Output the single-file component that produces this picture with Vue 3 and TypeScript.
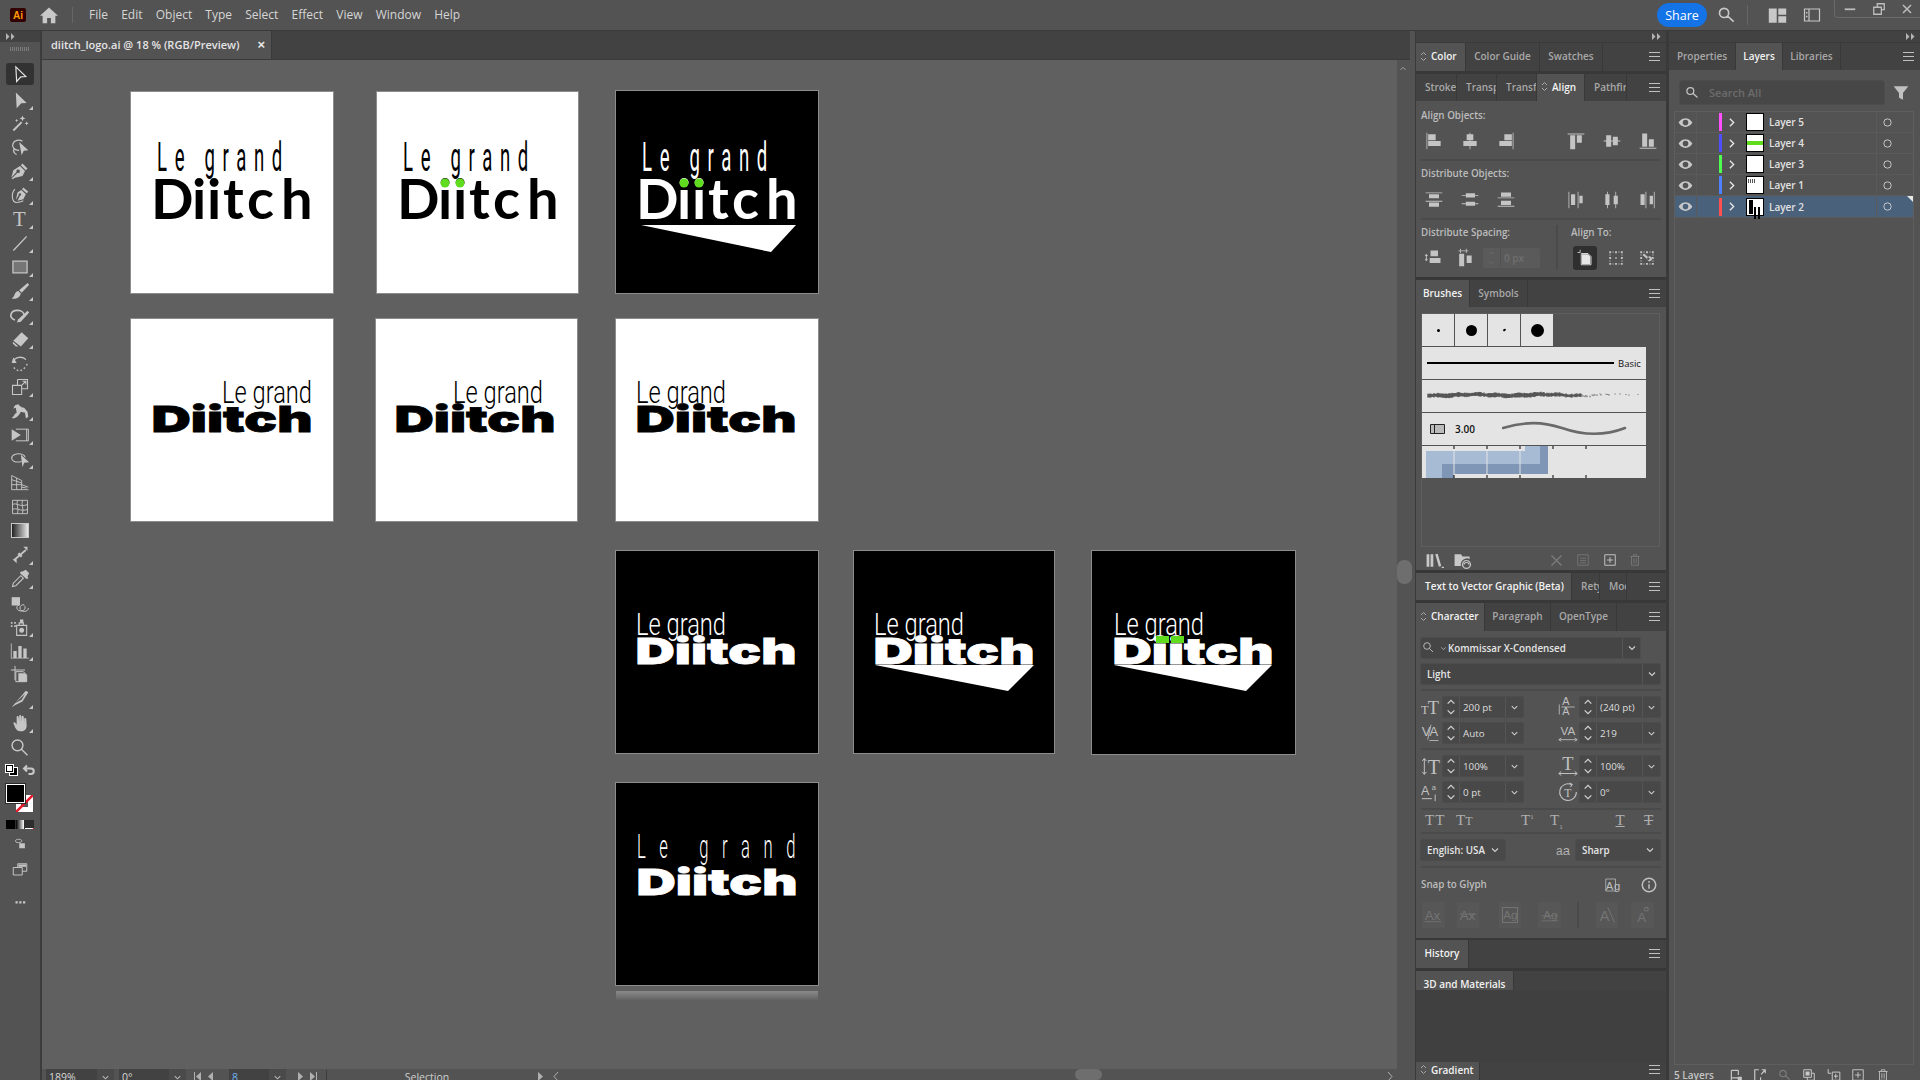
<script setup lang="ts">
import { h } from 'vue'

const r = (x: number, y: number, w: number, hh: number) => `M${x} ${y}h${w}v${hh}h${-w}z`

type Icon = { f?: string; s?: string; sw?: number; t?: [number, number, number, string][]; fa?: string; fo?: number }

const handles = r(3, 3, 2.5, 2.5) + r(18.5, 3, 2.5, 2.5) + r(3, 18.5, 2.5, 2.5) + r(18.5, 18.5, 2.5, 2.5) + r(10.75, 3, 2.5, 2.5) + r(10.75, 18.5, 2.5, 2.5) + r(3, 10.75, 2.5, 2.5) + r(18.5, 10.75, 2.5, 2.5)
const dashBox = 'M7 4h2M15 4h2M7 20h2M15 20h2M4 7v2M4 15v2M20 7v2M20 15v2'

const ICONS: Record<string, Icon> = {
  sel: { s: 'M7 3.5L19 15L13 15.5L8 21Z', sw: 1.4 },
  dsel: { f: 'M7 3L20 15.5L13.5 16L8 22Z' },
  wand: { s: 'M4 21L14 11', sw: 2.4, f: 'M15 3l1 2.500 2.500 1-2.500 1-1 2.500-1-2.500-2.500-1 2.500-1zM20 10l.7 1.800 1.800.7-1.800.7-.7 1.800-.7-1.800-1.800-.7 1.800-.7zM8 7l.6 1.400 1.400.6-1.400.6-.6 1.400-.6-1.400-1.400-.6 1.400-.6z' },
  lasso: { s: 'M11 16C5 16 2 12 3.500 8C5 4 11 2.500 15 5M5 14C3.500 17 5 20 8 21', sw: 1.5, f: 'M11 6L22 16L16.500 16.500L14 22Z' },
  pen: { f: 'M15 3L21 9L19 11L13 5ZM12 6L18 12L15 18L6 20L3 22L2 21L9 14A2 2 0 1 0 8 13L1.500 20L4 11Z' },
  cpen: { f: 'M16 3L22 8L20 10L14.500 5ZM13.500 6L19 11L16 17L9 19L12 13A1.500 1.500 0 1 0 10.500 12L7 18L9 9Z', s: 'M6 5C1 10 2 21 8 21C11 21 14 20 16 19', sw: 1.3 },
  type: { t: [[3.500, 20, 25, 'T']], fa: 'Liberation Serif' },
  line: { s: 'M4 21L20 4', sw: 1.6 },
  rect: { s: 'M3.500 5h17v14h-17z', sw: 1.5, f: 'M3.500 5h17v14h-17z', fo: 0.3 },
  brush: { f: 'M21 2.500L23 4.500L14 14L11 11ZM10 12L13 15C12 20 7 22 2 21C5 19 5 17 6 15C7 13 9 12 10 12Z' },
  shaper: { s: 'M17 12A8 6 0 1 0 6 18', sw: 2, f: 'M21 7L23 9L13 20L8 21L10 17Z' },
  eraser: { f: 'M14 4L22 11L13 21L4 14ZM4 15.500L10 21H7L3 17Z' },
  rotate: { s: 'M4 10C6 5 15 3 19 8M20.500 13l-.5 2M18 17.500l-1.500 1.500M14.500 20.500l-2 .5M10 21l-2-.5M6 19l-1.500-1.500', sw: 1.6, f: 'M4 5L8 12L2 12Z' },
  scale: { s: 'M3 10h11v11h-11zM9 3h12v11h-7M9 10V3M13 11L19 5M15 5h4v4', sw: 1.3 },
  warp: { f: 'M2 20C5 19 5 15 8 14L7 8L4 9L6 5L10 4C12 7 14 8 17 8L21 13L22 19L19 21L18 14L13 13C11 17 9 20 4 21Z' },
  free: { f: 'M2 5L13 12L2 19Z', s: 'M7 5h15v14h-15M20 5v14', sw: 1.2 },
  shape: { s: 'M14 15C6 17 2 14 2 11C2 7 8 5 13 6C17 7 18 9 18 10', sw: 1.3, f: 'M13 7L23 16L17 16.500L15 22Z' },
  persp: { s: 'M2 3V20H22M2 3L14 9V20M2 8L14 12M2 14H14M8 6V20M14 14L22 17M14 17L20 18', sw: 1.1 },
  mesh: { s: 'M3 4h18v16h-18zM3 9C8 6 12 13 21 9M3 15C8 12 12 18 21 15M9 4C7 9 11 14 9 20M15 4C13 9 17 14 15 20', sw: 1.1 },
  width: { s: 'M5 18L19 6', sw: 2, f: 'M16 2h5v5zM3 17h5v5zM11 9l4 4-2 2-4-4zM7 5l5 5M17 19l-5-5' },
  drop: { s: 'M3 21L4 17L13 8L16 11L7 20Z', sw: 1.3, f: 'M15 3L19 1L23 5L21 9L22 11L20 12L12 5L13 3Z' },
  blend: { f: 'M2 5h10v10h-10z', s: 'M17 15a5 4 0 1 1-6-1M22 18a5 4 0 1 1-5-4', sw: 1.2 },
  spray: { s: 'M8 10h12v12h-12zM11 10V7h5v3', sw: 1.3, f: 'M12 3h4v4h-4zM1 6h2v2h-2zM5 6h2v2h-2zM1 10h2v2h-2zM5 10h2v2h-2zM14 13a3 3 0 1 0 .01 0z' },
  graph: { f: r(1, 3, 1, 18) + r(1, 20, 22, 1) + r(4, 12, 4, 8) + r(10, 6, 4, 14) + r(16, 9, 4, 11) },
  board: { s: 'M1 6h17M6 1v17M7 8h9l4 4v8h-13z', sw: 1.2, f: 'M10 10h8l2 3v7h-10z' },
  slice: { f: 'M19 2L22 4L15 15L7 19L2 22ZM18 6L6 17L14 13Z' },
  hand: { f: 'M4 12C5 10 7 12 8 14V5C8 3 10 3 10.500 5L11 11V3.500C11 2 13 2 13.500 3.500L14 11V4.500C14 3 16 3 16.500 4.500L17 12V7C17 5.500 19 5.500 19.500 7L20 15C20 19 18 22 13 22C9 22 8 20 6 17Z' },
  zoom: { s: 'M15.500 10a6.500 6.500 0 1 1-13 0a6.500 6.500 0 1 1 13 0M14 15L21 22', sw: 1.7 },
  draw: { s: 'M4 6C4 3 14 3 14 6C14 8 12 9 9 9C5 9 4 8 4 6Z', sw: 1.4, f: 'M10 10h9v8h-9z' },
  screen: { s: 'M3 10h12v10h-12zM9 10V5h12v10h-6', sw: 1.3, f: 'M10 6h10v3h-10z' },
  more: { f: 'M6 11h3v3h-3zM11 11h3v3h-3zM16 11h3v3h-3z' },
  alignL: { f: r(3, 2, 1, 20) + r(5, 4, 9, 7) + r(5, 12, 15, 6) },
  alignHC: { f: r(11.5, 2, 1, 20) + r(8, 4, 8, 7) + r(4, 12, 16, 6) },
  alignR: { f: r(20, 2, 1, 20) + r(10, 4, 9, 7) + r(4, 12, 15, 6) },
  alignT: { f: r(2, 3, 20, 1.2) + r(5, 5, 6, 17) + r(13, 5, 6, 9) },
  alignVC: { f: r(2, 11.5, 20, 1) + r(5, 5, 6, 14) + r(13, 7, 6, 10) },
  alignB: { f: r(2, 20, 20, 1.2) + r(5, 3, 6, 16) + r(13, 10, 6, 9) },
  distT: { f: r(2, 3, 20, 1) + r(6, 5, 12, 5) + r(2, 13, 20, 1) + r(6, 15, 12, 5) },
  distVC: { f: r(2, 6, 20, 1) + r(7, 4, 11, 5) + r(2, 16, 20, 1) + r(7, 14, 11, 5) },
  distB: { f: r(6, 3, 12, 5) + r(2, 9, 20, 1) + r(6, 13, 12, 5) + r(2, 19, 20, 1) },
  distL: { f: r(3, 2, 1, 20) + r(6, 5, 5, 13) + r(14, 2, 1, 20) + r(16, 7, 4, 9) },
  distHC: { f: r(6, 2, 1, 20) + r(4, 5, 5, 13) + r(16, 2, 1, 20) + r(14, 7, 5, 10) },
  distR: { f: r(3, 5, 5, 13) + r(9, 2, 1, 20) + r(14, 7, 4, 10) + r(19, 2, 1, 20) },
  spV: { f: r(9, 3, 9, 7) + r(8, 12, 13, 6) + 'M4 7l2 2.500h-1.400v4H6l-2 2.500-2-2.500h1.400v-4H2z' },
  spH: { f: r(5, 7, 6, 15) + r(14, 9, 6, 9) + r(4, 3, 12, 1) + r(6, 1, 1, 5) + r(13, 1, 1, 5) },
  artb: { s: 'M7 6h9l4 4v11H7z', sw: 1.2, f: 'M8 7h8l3 3v10H8zM2 4h4v1H2zM5 1h1v3H5z' },
  selb: { s: dashBox, sw: 1, f: handles + r(11, 11, 2, 2) },
  keyb: { s: dashBox, sw: 1, f: handles + 'M8 6l8 7-2 2-8-7zM13 11a3 3 0 1 0 5 4a3 3 0 1 0-5-4z' },
  library: { f: r(2, 4, 3.5, 16) + r(7, 4, 3.5, 16) + 'M13 4L16 3.500L20.500 19L17.500 20ZM21 20h3v1.500h-3z' },
  folder: { s: 'M17 12a5 5 0 1 0 .01 0M14 17a3 2.500 0 0 1 6 0', sw: 1.5, f: 'M2 4h8l2 3h9v3a8 8 0 0 0-11 9H2z' },
  nobrush: { s: 'M4 4L20 20M20 4L4 20', sw: 2 },
  list: { s: 'M3 3h18v18H3zM7 9h10M7 13h10M7 17h10', sw: 1.3 },
  plus: { s: 'M3 3h18v18H3zM12 7v10M7 12h10', sw: 1.6 },
  trash: { s: 'M4 6h16M9 6V3h6v3M6 6v15h12V6M10 9v9M14 9v9', sw: 1.4 },
  search: { s: 'M14 9.500a5.500 5.500 0 1 1-11 0a5.500 5.500 0 1 1 11 0M13 13.500L20 20', sw: 2 },
  filter: { f: 'M1 2h22L15 12v10l-6-3v-7z' },
  info: { s: 'M21 12a9 9 0 1 1-18 0a9 9 0 1 1 18 0M12 11v6', sw: 2, f: 'M11 6.500h2v2.500h-2z' },
  eye: { f: 'M12 5C6 5 2 10 1 12C2 14 6 19 12 19C18 19 22 14 23 12C22 10 18 5 12 5ZM12 7.500a4.500 4.500 0 1 1 0 9a4.500 4.500 0 1 1 0-9z' },
  chev: { s: 'M9 5L16 12L9 19', sw: 2.4 },
  circle: { s: 'M20 12a8 8 0 1 1-16 0a8 8 0 1 1 16 0', sw: 2 },
  caret: { s: 'M6 9L12 15L18 9', sw: 2.2 },
  up: { s: 'M6 14L12 8L18 14', sw: 2.2 },
  caretb: { s: 'M4 8L12 16L20 8', sw: 3 },
  upb: { s: 'M4 16L12 8L20 16', sw: 3 },
  home: { f: 'M12 2L24 13H20.500V23H14.500V16H9.500V23H3.500V13H0Z' },
  layouts: { f: r(1, 3, 10, 18) + r(13, 3, 10, 8) + r(13, 13, 10, 8) },
  panel: { s: 'M2 4h20v16H2zM8 4v16', sw: 1.6, f: r(4, 8, 2, 2) + r(4, 13, 2, 2) },
  min: { f: r(3, 11, 18, 3) },
  restore: { s: 'M9 8V3h12v10h-5M3 9h13v12H3z', sw: 2.2 },
  close: { s: 'M4 4L20 20M20 4L4 20', sw: 3 },
  artboardL: { s: 'M4 4h12M4 4v17M4 17h12M16 4v8', sw: 2, f: r(15, 15, 7, 7) },
  outL: { s: 'M10 3H3v18M14 11L21 3M15 3h6v6M13 21v-5', sw: 2 },
  locate: { s: 'M14 9.500a5.500 5.500 0 1 1-11 0a5.500 5.500 0 1 1 11 0M13 13.500L20 20', sw: 2 },
  mask: { s: 'M3 3h13v13H3zM9 16v5h12V9h-5', sw: 1.7, f: r(6, 6, 7, 7) },
  sublayer: { s: 'M9 7h13v14H9zM15 10v8M12 14h7M2 2v7h5', sw: 1.7 },
  tt1: { t: [[0, 20, 15, 'T'], [8, 20, 22, 'T']], fa: 'Liberation Serif' },
  lead: { t: [[5, 10, 13, 'A'], [5, 22, 13, 'A']], fa: 'Liberation Sans', s: 'M4 12h16M1.500 9v12', sw: 1 },
  kern: { t: [[1, 16, 16, 'V'], [10, 16, 16, 'A']], fa: 'Liberation Sans', s: 'M12 2L8 20M10 21h11', sw: 1 },
  track: { t: [[3, 14, 14, 'VA']], fa: 'Liberation Sans', s: 'M1 20h22M1 20l3-2M1 20l3 2M23 20l-3-2M23 20l-3 2', sw: 1 },
  vs: { t: [[8, 21, 24, 'T']], fa: 'Liberation Serif', s: 'M4 3v19M4 3L1.500 6M4 3L6.500 6M4 22L1.500 19M4 22L6.500 19', sw: 1.2 },
  hs: { t: [[5, 17, 22, 'T']], fa: 'Liberation Serif', s: 'M1 21h22M1 21l3-2.500M1 21l3 2.500M23 21l-3-2.500M23 21l-3 2.500', sw: 1.2 },
  base: { t: [[0, 15, 15, 'A'], [13, 9, 9, 'a']], fa: 'Liberation Sans', s: 'M1 20h12M17 23v-8', sw: 1.2 },
  rot: { t: [[7.500, 18, 14, 'T']], fa: 'Liberation Serif', s: 'M22 12a10 10 0 1 1-6-9M14 1l3 2-2 3', sw: 1.3 },
  font: { s: 'M11 9a5 5 0 1 1-10 0a5 5 0 1 1 10 0M10 13L15 18', sw: 1.4 },
  aag: { t: [[1, 18, 15, 'A'], [12, 18, 15, 'g']], fa: 'Liberation Sans', s: 'M1 4h13v16H1z', sw: 1 },
  ax1: { t: [[2, 18, 16, 'Ax']], fa: 'Liberation Sans', s: 'M2 20h20', sw: 1 },
  ax2: { t: [[2, 18, 16, 'Ax']], fa: 'Liberation Sans', s: 'M2 11h20', sw: 1 },
  ag3: { t: [[4, 17, 14, 'Ag']], fa: 'Liberation Sans', s: 'M3 3h18v18H3z', sw: 1.3 },
  ag4: { t: [[4, 17, 14, 'Ag']], fa: 'Liberation Sans', s: 'M2 13h20M2 19h20', sw: 1 },
  a5: { t: [[3, 19, 18, 'A']], fa: 'Liberation Sans', s: 'M13 3L21 21', sw: 1.2 },
  a6: { t: [[5, 20, 16, 'A']], fa: 'Liberation Sans', s: 'M14 3h4v4h-4z', sw: 1.2 },
}

const Ico = (p: { n: string; w?: number }) => {
  const ic = ICONS[p.n]
  const w = p.w ?? 20
  const kids: ReturnType<typeof h>[] = []
  if (ic.f) kids.push(h('path', { d: ic.f, fill: 'currentColor', 'fill-opacity': ic.fo ?? 1 }))
  if (ic.s) kids.push(h('path', { d: ic.s, fill: 'none', stroke: 'currentColor', 'stroke-width': ic.sw ?? 1.5 }))
  if (ic.t) for (const [x, y, size, str] of ic.t) kids.push(h('text', { x, y, 'font-size': size, 'font-family': ic.fa, fill: 'currentColor' }, str))
  return h('svg', { width: w, height: w, viewBox: '0 0 24 24', style: 'display:block;flex:none' }, kids)
}
Ico.props = ['n', 'w']

const Tick = () => h('svg', { width: 7, height: 11, viewBox: '0 0 7 11', style: 'flex:none;display:block' }, [h('path', { d: 'M1 4L3.500 1.500L6 4M1 7L3.500 9.500L6 7', fill: 'none', stroke: '#a8a8a8', 'stroke-width': 1 })])

const menu = ['File', 'Edit', 'Object', 'Type', 'Select', 'Effect', 'View', 'Window', 'Help']
const tools = ['sel', 'dsel', 'wand', 'lasso', 'pen', 'cpen', 'type', 'line', 'rect', 'brush', 'shaper', 'eraser', 'rotate', 'scale', 'warp', 'free', 'shape', 'persp', 'mesh', 'grad', 'width', 'drop', 'blend', 'spray', 'graph', 'board', 'slice', 'hand', 'zoom']
const noTri = new Set(['sel', 'wand', 'lasso', 'rotate', 'persp', 'mesh', 'grad', 'zoom', 'board', 'blend'])

type Tab = { l: string; w: number; on?: boolean; tick?: boolean }
const t1: Tab[] = [{ l: 'Color', w: 50, on: true, tick: true }, { l: 'Color Guide', w: 74 }, { l: 'Swatches', w: 63 }]
const t2: Tab[] = [{ l: 'Stroke', w: 41 }, { l: 'Transp', w: 40 }, { l: 'Transf', w: 40 }, { l: 'Align', w: 48, on: true, tick: true }, { l: 'Pathfir', w: 42 }]
const t3: Tab[] = [{ l: 'Brushes', w: 54, on: true }, { l: 'Symbols', w: 58 }]
const t4: Tab[] = [{ l: 'Text to Vector Graphic (Beta)', w: 156, on: true }, { l: 'Rety', w: 28 }, { l: 'Moc', w: 27 }]
const t5: Tab[] = [{ l: 'Character', w: 69, on: true, tick: true }, { l: 'Paragraph', w: 66 }, { l: 'OpenType', w: 66 }]
const t6: Tab[] = [{ l: 'History', w: 53, on: true }]
const t7: Tab[] = [{ l: '3D and Materials', w: 98, on: true }]
const t8: Tab[] = [{ l: 'Gradient', w: 64, on: true, tick: true }]
const t9: Tab[] = [{ l: 'Properties', w: 67 }, { l: 'Layers', w: 47, on: true }, { l: 'Libraries', w: 58 }]

const alignRow = ['alignL', 'alignHC', 'alignR', 'alignT', 'alignVC', 'alignB']
const distRow = ['distT', 'distVC', 'distB', 'distL', 'distHC', 'distR']

const charRows = [
  ['tt1', '200 pt', 'lead', '(240 pt)'],
  ['kern', 'Auto', 'track', '219'],
  ['vs', '100%', 'hs', '100%'],
  ['base', '0 pt', 'rot', '0°'],
]

const layers = [
  { n: 'Layer 5', c: '#ff4fff', th: 'plain' },
  { n: 'Layer 4', c: '#4f4fff', th: 'green' },
  { n: 'Layer 3', c: '#4fff4f', th: 'plain' },
  { n: 'Layer 1', c: '#4f80ff', th: 'tiny' },
  { n: 'Layer 2', c: '#ff4f4f', th: 'black', on: true },
]

const footIcons = ['artboardL', 'outL', 'locate', 'mask', 'sublayer', 'plus', 'trash']

// rough charcoal brush stroke, built from short deterministic ticks
const rough = (() => {
  let dk = ''
  let lt = ''
  for (let x = 6; x < 218; x += 1) {
    const c = 15 + Math.sin(x * 0.09) * 0.6 + Math.sin(x * 0.31) * 0.4
    const n = Math.abs(Math.sin(x * 12.9898) * 43758.5453) % 1
    if (x < 160) {
      const hh = 2.6 + n * 2.4 - Math.max(0, x - 110) * 0.018
      dk += `M${x} ${(c - hh / 2).toFixed(1)}v${hh.toFixed(1)}`
    } else if (n < 0.62 - (x - 160) * 0.009) {
      const hh = 0.8 + n * 1.6
      lt += `M${x} ${(c - 1 + n * 2).toFixed(1)}v${hh.toFixed(1)}`
    }
  }
  return { dk, lt }
})()

type Le = { x: number; y: number; len: number; size: number; ls: number; wt: number }
type Di = { x: number | string; y: number; len?: number; size: number; fam: string; wt: number; st?: number }
type Board = { x: number; y: number; w: number; h: number; dark?: boolean; le: Le; di: Di; swoosh?: string; dots?: boolean; bars?: boolean }

const spaced: Le = { x: 26, y: 79, len: 133, size: 41, ls: 17, wt: 400 }
const round: Di = { x: '20 61 76 92 116 150', y: 127, size: 56, fam: 'Lato', wt: 700 }
const wide = (x: number, y = 113): Di => ({ x: x - 1.5, y, len: 161, size: 36, fam: 'Inter', wt: 900, st: 0.8 })
const tight = (x: number): Le => ({ x, y: 84, len: 90, size: 32, ls: 0, wt: 300 })

const boards: Board[] = [
  { x: 131, y: 92, w: 202, h: 201, le: spaced, di: round },
  { x: 377, y: 92, w: 201, h: 201, le: spaced, di: round, dots: true },
  { x: 616, y: 91, w: 202, h: 202, dark: true, le: { ...spaced, y: 80 }, di: { ...round, y: 128 }, dots: true, swoosh: '25,134 180,134 155,161' },
  { x: 131, y: 319, w: 202, h: 202, le: tight(91), di: wide(22) },
  { x: 376, y: 319, w: 201, h: 202, le: tight(77), di: wide(20) },
  { x: 616, y: 319, w: 202, h: 202, le: tight(20), di: wide(21) },
  { x: 616, y: 551, w: 202, h: 202, dark: true, le: tight(20), di: wide(21) },
  { x: 854, y: 551, w: 200, h: 202, dark: true, le: tight(20), di: wide(21), swoosh: '21,114 180,114 154,140' },
  { x: 1092, y: 551, w: 203, h: 203, dark: true, le: tight(22), di: wide(22), swoosh: '22,114 180,114 154,140', bars: true },
  { x: 616, y: 783, w: 202, h: 202, dark: true, le: { x: 21, y: 75, len: 172, size: 33, ls: 27, wt: 300 }, di: wide(22, 112) },
]
</script>

<template>
  <div class="app">
    <header class="top">
      <div class="ai"><span>Ai</span></div>
      <div class="home"><Ico n="home" :w="18" /></div>
      <i class="vsep"></i>
      <nav class="menu"><span v-for="m in menu" :key="m">{{ m }}</span></nav>
      <div class="top-right">
        <button class="share">Share</button>
        <div class="topi s1"><Ico n="search" :w="20" /></div>
        <i class="vsep v2"></i>
        <div class="topi s2"><Ico n="layouts" :w="19" /></div>
        <div class="topi s3"><Ico n="panel" :w="18" /></div>
        <div class="win">
          <Ico n="min" :w="14" />
          <Ico n="restore" :w="14" />
          <Ico n="close" :w="12" />
        </div>
      </div>
    </header>

    <div class="main">
      <aside class="toolbar">
        <div class="tb-head"><svg width="9" height="7" viewBox="0 0 9 7"><path d="M0 0l3.500 3.500L0 7zM5 0l3.500 3.500L5 7z" fill="#b4b4b4" /></svg></div>
        <div class="grip"></div>
        <div v-for="(t, i) in tools" :key="t" class="tool" :class="{ act: i === 0 }">
          <div v-if="t === 'grad'" class="gradtool"></div>
          <Ico v-else :n="t" :w="20" />
          <i v-if="!noTri.has(t)" class="tri"></i>
        </div>
        <div class="defaults">
          <div class="mini"><i class="m1"></i><i class="m2"></i></div>
          <svg width="13" height="12" viewBox="0 0 24 24"><path d="M5 9h12a5 5 0 0 1 0 11h-5M9 3L3 9l6 6" fill="none" stroke="#c8c8c8" stroke-width="4" /></svg>
        </div>
        <div class="fillstroke">
          <div class="strokebox"><svg width="17" height="17" viewBox="0 0 17 17"><rect width="17" height="17" fill="#fff" /><rect x="5" y="5" width="7" height="7" fill="#535353" /><path d="M0 17L17 0" stroke="#e8172c" stroke-width="2.500" /></svg></div>
          <div class="fillbox"></div>
        </div>
        <div class="modes"><i class="bk"></i><i class="gr"></i><i class="no"><svg width="10" height="9" viewBox="0 0 10 9"><rect width="10" height="9" fill="#fff" /><path d="M0 9L10 0" stroke="#e8172c" stroke-width="2" /></svg></i></div>
        <div class="tool t2"><Ico n="draw" :w="15" /></div>
        <div class="tool t3"><Ico n="screen" :w="18" /></div>
        <div class="tool t4"><Ico n="more" :w="18" /></div>
      </aside>

      <section class="center">
        <div class="doctabs">
          <div class="doctab"><span>diitch_logo.ai @ 18 % (RGB/Preview)</span><b>×</b></div>
        </div>
        <div class="canvaswrap">
          <div class="canvas">
            <div
              v-for="(b, i) in boards"
              :key="i"
              class="board"
              :class="{ dark: b.dark }"
              :style="{ left: b.x - 42 + 'px', top: b.y - 60 + 'px', width: b.w + 'px', height: b.h + 'px' }"
            >
              <svg :width="b.w" :height="b.h" :viewBox="`0 0 ${b.w} ${b.h}`" :fill="b.dark ? '#fff' : '#000'" class="logo">
                <text
                  :x="b.le.x" :y="b.le.y" :font-size="b.le.size" :font-weight="b.le.wt" font-family="Roboto"
                  :letter-spacing="b.le.ls" :textLength="b.le.len" lengthAdjust="spacingAndGlyphs"
                >Le grand</text>
                <text
                  :x="b.di.x" :y="b.di.y" :font-size="b.di.size" :font-weight="b.di.wt" :font-family="b.di.fam"
                  :textLength="b.di.len" :lengthAdjust="b.di.len ? 'spacingAndGlyphs' : undefined"
                  :stroke="b.di.st ? (b.dark ? '#fff' : '#000') : undefined" :stroke-width="b.di.st"
                >Diitch</text>
                <polygon v-if="b.swoosh" :points="b.swoosh" />
                <template v-if="b.dots">
                  <circle cx="68" :cy="b.di.y - 36" r="4.500" fill="#5fdc1e" />
                  <circle cx="83" :cy="b.di.y - 36" r="4.500" fill="#5fdc1e" />
                </template>
                <template v-if="b.bars">
                  <rect x="64" y="85" width="13" height="7" fill="#5fdc1e" />
                  <rect x="79" y="85" width="13" height="7" fill="#5fdc1e" />
                </template>
              </svg>
            </div>
            <div class="ghost"></div>
          </div>
          <div class="vscroll">
            <Ico n="up" :w="10" class="vup" />
            <i class="vthumb"></i>
          </div>
        </div>
        <div class="status">
          <span class="sf f1">189%</span><span class="sc"><Ico n="caret" :w="11" /></span>
          <span class="sf f2">0°</span><span class="sc"><Ico n="caret" :w="11" /></span>
          <span class="nav"><svg width="26" height="11" viewBox="0 0 26 11"><path d="M1 2h1v9H1zM8 2v9L3 6.500zM20 2v9L15 6.500z" fill="#b0b0b0" /></svg></span>
          <span class="sf f3">8</span><span class="sc"><Ico n="caret" :w="11" /></span>
          <span class="nav n2"><svg width="26" height="11" viewBox="0 0 26 11"><path d="M6 2v9l5-4.500zM18 2v9l5-4.500zM24 2h1v9h-1z" fill="#b0b0b0" /></svg></span>
          <span class="sel-txt">Selection</span>
          <span class="nav n3"><svg width="26" height="11" viewBox="0 0 26 11"><path d="M1 2v9l5-4.500z" fill="#b0b0b0" /><path d="M21 2L17 6.500L21 11" fill="none" stroke="#b0b0b0" /></svg></span>
          <i class="hthumb"></i>
          <span class="nav n4"><svg width="8" height="11" viewBox="0 0 8 11"><path d="M2 2L6 6.500L2 11" fill="none" stroke="#b0b0b0" /></svg></span>
        </div>
      </section>

      <div class="gutter"></div>

      <div class="dock dk1">
        <div class="collapse"><svg width="9" height="7" viewBox="0 0 9 7"><path d="M0 0l3.500 3.500L0 7zM5 0l3.500 3.500L5 7z" fill="#b4b4b4" /></svg></div>
        <div class="strip s28">
          <div v-for="t in t1" :key="t.l" class="tab" :class="{ on: t.on, ticked: t.tick }" :style="{ width: t.w + 'px' }"><Tick v-if="t.tick" />{{ t.l }}</div>
          <i class="burger"></i>
        </div>
        <div class="gap"></div>
        <div class="strip">
          <div v-for="t in t2" :key="t.l" class="tab clip" :class="{ on: t.on, ticked: t.tick }" :style="{ width: t.w + 'px' }"><Tick v-if="t.tick" />{{ t.l }}</div>
          <i class="burger"></i>
        </div>
        <div class="body align">
          <div class="lbl l1">Align Objects:</div>
          <div class="icorow ir1">
            <div v-for="(n, i) in alignRow" :key="n" class="cell" :class="{ gapl: i === 3 }"><Ico :n="n" :w="20" /></div>
          </div>
          <div class="hr h1"></div>
          <div class="lbl l2">Distribute Objects:</div>
          <div class="icorow ir2">
            <div v-for="(n, i) in distRow" :key="n" class="cell" :class="{ gapl: i === 3 }"><Ico :n="n" :w="20" /></div>
          </div>
          <div class="hr h2"></div>
          <div class="spacing">
            <div class="sp-left">
              <div class="lbl">Distribute Spacing:</div>
              <div class="sp-row">
                <Ico n="spV" :w="20" />
                <Ico n="spH" :w="20" />
                <div class="sp-input"><span class="spin"><Ico n="up" :w="9" /><Ico n="caret" :w="9" /></span><em>0 px</em></div>
              </div>
            </div>
            <i class="vdiv"></i>
            <div class="sp-right">
              <div class="lbl">Align To:</div>
              <div class="sp-row r2">
                <div class="atbtn on"><Ico n="artb" :w="18" /></div>
                <div class="atbtn"><Ico n="selb" :w="18" /></div>
                <div class="atbtn"><Ico n="keyb" :w="18" /></div>
              </div>
            </div>
          </div>
        </div>
        <div class="gap"></div>
        <div class="strip">
          <div v-for="t in t3" :key="t.l" class="tab" :class="{ on: t.on }" :style="{ width: t.w + 'px' }">{{ t.l }}</div>
          <i class="burger"></i>
        </div>
        <div class="body brushes">
          <div class="brushbox">
            <div class="tiles">
              <div class="tile"><i class="dot b3"></i></div>
              <div class="tile"><i class="dot b10"></i></div>
              <div class="tile"><i class="dot b2"></i></div>
              <div class="tile"><i class="dot b12"></i></div>
            </div>
            <div class="brow basic"><i class="bline"></i><span>Basic</span></div>
            <div class="brow">
              <svg width="224" height="32" viewBox="0 0 224 32">
                <path :d="rough.dk" fill="none" stroke="#262626" stroke-width="1" />
                <path :d="rough.lt" fill="none" stroke="#5a5a5a" stroke-width="1" />
              </svg>
            </div>
            <div class="brow cal">
              <svg class="calic" width="15" height="10" viewBox="0 0 15 10"><path d="M.5.5h14v9H.5zM4.500.5v9" fill="#bbb" stroke="#222" /></svg>
              <span>3.00</span>
              <svg class="wave" width="126" height="18" viewBox="0 0 126 18"><path d="M1 8C25 1 40 2 60 8C80 15 100 17 123 8" fill="none" stroke="#6a6a6a" stroke-width="2.600" stroke-linecap="round" /></svg>
            </div>
            <div class="brow pattern">
              <svg width="224" height="32" viewBox="0 0 224 32">
                <path d="M118 0H126V28H32V32H20V18H118Z" fill="#7f96b6" />
                <path d="M4 5H103V0H118V18H20V32H4Z" fill="#a8bbd4" />
                <path d="M32 0V29M65 0V29M98 0V29" stroke="#e4e4e4" stroke-width="1" />
                <path d="M32 0v3M65 0v3M98 0v3M131 0v3M164 0v3M32 29v3M65 29v3M98 29v3M131 29v3M164 29v3" stroke="#000" />
              </svg>
            </div>
          </div>
          <div class="brfoot">
            <Ico n="library" :w="19" />
            <Ico n="folder" :w="19" class="fo" />
            <span class="sp"></span>
            <Ico n="nobrush" :w="15" class="dim f1a" />
            <Ico n="list" :w="14" class="dim f1b" />
            <Ico n="plus" :w="14" class="f1c" />
            <Ico n="trash" :w="14" class="dim f1d" />
          </div>
        </div>
        <div class="gap"></div>
        <div class="strip">
          <div v-for="t in t4" :key="t.l" class="tab clip" :class="{ on: t.on }" :style="{ width: t.w + 'px' }">{{ t.l }}</div>
          <i class="burger"></i>
        </div>
        <div class="gap"></div>
        <div class="strip s28">
          <div v-for="t in t5" :key="t.l" class="tab" :class="{ on: t.on, ticked: t.tick }" :style="{ width: t.w + 'px' }"><Tick v-if="t.tick" />{{ t.l }}</div>
          <i class="burger"></i>
        </div>
        <div class="body char">
          <div class="field fontf">
            <span class="fic"><Ico n="font" :w="16" /><Ico n="caret" :w="9" /></span>
            <span class="ftxt">Kommissar X-Condensed</span>
            <span class="fcar"><Ico n="caret" :w="12" /></span>
          </div>
          <div class="field lightf"><span class="ftxt l">Light</span><span class="fcar"><Ico n="caret" :w="12" /></span></div>
          <div class="hr c1"></div>
          <template v-for="(row, i) in charRows" :key="i">
            <div class="crow" :class="'cr' + i">
              <div class="ccell">
                <div class="cic"><Ico :n="row[0]" :w="20" /></div>
                <div class="cbox">
                  <span class="spin"><Ico n="upb" :w="10" /><Ico n="caretb" :w="10" /></span>
                  <span class="val">{{ row[1] }}</span>
                  <span class="ccar"><Ico n="caret" :w="11" /></span>
                </div>
              </div>
              <div class="ccell">
                <div class="cic"><Ico :n="row[2]" :w="20" /></div>
                <div class="cbox">
                  <span class="spin"><Ico n="upb" :w="10" /><Ico n="caretb" :w="10" /></span>
                  <span class="val">{{ row[3] }}</span>
                  <span class="ccar"><Ico n="caret" :w="11" /></span>
                </div>
              </div>
            </div>
            <div v-if="i === 1" class="hr c2"></div>
          </template>
          <div class="hr c3"></div>
          <div class="ttrow">
            <span class="tt a">TT</span>
            <span class="tt b">T<small>T</small></span>
            <span class="tt c">T<sup>1</sup></span>
            <span class="tt d">T<sub>1</sub></span>
            <span class="tt e"><u>T</u></span>
            <span class="tt f"><s>T</s></span>
          </div>
          <div class="hr c4"></div>
          <div class="langrow">
            <div class="field lang"><span class="ftxt l">English: USA</span><span class="nocar"><Ico n="caret" :w="12" /></span></div>
            <span class="aa">a<small>a</small></span>
            <div class="field sharp"><span class="ftxt l">Sharp</span><span class="nocar"><Ico n="caret" :w="12" /></span></div>
          </div>
          <div class="hr c5"></div>
          <div class="snap"><span class="lbl">Snap to Glyph</span><span class="snapi"><Ico n="aag" :w="18" /><Ico n="info" :w="18" /></span></div>
          <div class="glyphs">
            <div class="gb"><Ico n="ax1" :w="20" /></div>
            <div class="gb"><Ico n="ax2" :w="20" /></div>
            <div class="gb"><Ico n="ag3" :w="20" /></div>
            <div class="gb"><Ico n="ag4" :w="20" /></div>
            <i class="gdiv"></i>
            <div class="gb"><Ico n="a5" :w="20" /></div>
            <div class="gb"><Ico n="a6" :w="20" /></div>
          </div>
        </div>
        <div class="gap g2"></div>
        <div class="strip s28">
          <div v-for="t in t6" :key="t.l" class="tab" :class="{ on: t.on }" :style="{ width: t.w + 'px' }">{{ t.l }}</div>
          <i class="burger"></i>
        </div>
        <div class="gap"></div>
        <div class="strip s19">
          <div v-for="t in t7" :key="t.l" class="tab" :class="{ on: t.on }" :style="{ width: t.w + 'px' }">{{ t.l }}</div>
        </div>
        <div class="darkbody"></div>
        <div class="strip last">
          <div v-for="t in t8" :key="t.l" class="tab" :class="{ on: t.on, ticked: t.tick }" :style="{ width: t.w + 'px' }"><Tick v-if="t.tick" />{{ t.l }}</div>
          <i class="burger"></i>
        </div>
      </div>

      <div class="dockgap"></div>

      <div class="dock dk2">
        <div class="collapse"><svg width="9" height="7" viewBox="0 0 9 7"><path d="M0 0l3.500 3.500L0 7zM5 0l3.500 3.500L5 7z" fill="#b4b4b4" /></svg></div>
        <div class="strip">
          <div v-for="t in t9" :key="t.l" class="tab" :class="{ on: t.on }" :style="{ width: t.w + 'px' }">{{ t.l }}</div>
          <i class="burger"></i>
        </div>
        <div class="body layersbody">
          <div class="lsearch">
            <div class="lsfield"><Ico n="search" :w="15" /><span>Search All</span></div>
            <Ico n="filter" :w="16" class="lfilter" />
          </div>
          <div class="layerbox">
            <div v-for="l in layers" :key="l.n" class="lrow" :class="{ on: l.on }">
              <div class="leye"><Ico n="eye" :w="15" /></div>
              <div class="lmid">
                <i class="lchip" :style="{ background: l.c }"></i>
                <span class="lchev"><Ico n="chev" :w="13" /></span>
                <span class="thumb" :class="l.th"><i></i></span>
                <span class="lname">{{ l.n }}</span>
              </div>
              <div class="ltgt"><Ico n="circle" :w="11" /></div>
              <i v-if="l.on" class="lcorner"></i>
            </div>
          </div>
          <div class="lfoot">
            <span class="lcount">5 Layers</span>
            <span class="lficons"><Ico v-for="n in footIcons" :key="n" :n="n" :w="14" :class="{ dim: n === 'locate' }" /></span>
          </div>
        </div>
      </div>
    </div>
  </div>
</template>

<style>
html, body { margin: 0; background: #535353; overflow: hidden; }
</style>

<style scoped>
.app { width: 1920px; height: 1080px; overflow: hidden; background: #535353; display: flex; flex-direction: column; font-family: "Open Sans", "Noto Sans", sans-serif; color: #d0d0d0; }
.top { height: 30px; flex: none; display: flex; align-items: center; background: #535353; border-bottom: 1px solid #3a3a3a; box-sizing: content-box; }
.ai { width: 16px; height: 14px; margin-left: 10px; background: #330000; border-radius: 2px; display: flex; align-items: center; justify-content: center; color: #ff9a00; font: 700 10px "Liberation Sans", sans-serif; }
.home { margin-left: 14px; color: #c8c8c8; }
.vsep { width: 1px; height: 16px; background: #666; margin-left: 14px; }
.menu { display: flex; margin-left: 16px; gap: 13.2px; font-size: 12px; color: #d6d6d6; padding-bottom: 2px; }
.top-right { margin-left: auto; display: flex; align-items: center; height: 30px; }
.share { width: 50px; height: 24px; border: 0; border-radius: 12px; background: #1473e6; color: #fff; font: 500 12.500px "Open Sans", sans-serif; padding: 0; }
.topi { color: #c8c8c8; }
.s1 { margin-left: 9.500px; }
.v2 { height: 20px; margin-left: 10.500px; }
.s2 { margin-left: 20px; }
.s3 { margin-left: 16px; }
.win { align-self: flex-start; margin-left: 13px; width: 86px; height: 18px; box-sizing: border-box; border: 1px solid #6a6a6a; border-top: 0; border-right: 0; border-radius: 0 0 0 4px; display: flex; align-items: center; justify-content: space-around; color: #bdbdbd; }

.main { flex: 1; display: flex; min-height: 0; }

.toolbar { width: 40px; flex: none; border-right: 2px solid #3c3c3c; background: #535353; display: flex; flex-direction: column; align-items: center; color: #c6c6c6; position: relative; }
.tb-head { width: 100%; height: 11px; background: #424242; display: flex; align-items: center; padding-left: 6px; box-sizing: border-box; flex: none; }
.grip { width: 20px; height: 4px; background: repeating-linear-gradient(90deg, #7c7c7c 0 1px, transparent 1px 2px); flex: none; margin-top: 5px; margin-bottom: 12.500px; }
.tool { width: 28px; height: 24px; flex: none; display: flex; align-items: center; justify-content: center; position: relative; box-sizing: border-box; }
.tool.act { background: #323232; border-radius: 3px; color: #e4e4e4; height: 22px; margin-bottom: 2px; margin-top: -1px; }
.tool.act + .tool { margin-top: 1px; margin-bottom: -1px; }
.tri { position: absolute; right: 1px; bottom: 2px; width: 0; height: 0; border-left: 4px solid transparent; border-bottom: 4px solid #c8c8c8; }
.gradtool { width: 16px; height: 13px; border: 1px solid #c8c8c8; background: linear-gradient(90deg, #222, #e8e8e8); }
.defaults { display: flex; align-items: center; justify-content: space-between; width: 30px; margin-top: 3px; height: 16px; flex: none; }
.mini { width: 12px; height: 11px; position: relative; }
.mini i { position: absolute; width: 7px; height: 7px; border: 1px solid #fff; }
.m1 { left: 4px; top: 3px; background: #000; }
.m2 { left: 0; top: 0; background: #fff; box-shadow: 0 0 0 1px #000 inset; }
.fillstroke { position: relative; width: 28px; height: 30px; margin-top: 6px; flex: none; }
.fillbox { position: absolute; left: 0; top: 0; width: 17px; height: 17px; background: #000; border: 1px solid #fff; box-shadow: 0 0 0 1px #2a2a2a; }
.strokebox { position: absolute; left: 10px; top: 11px; width: 17px; height: 17px; }
.modes { width: 28px; height: 9px; margin-top: 6px; display: flex; gap: 1px; flex: none; background: #2e2e2e; padding: 0; }
.modes i { flex: 1; display: block; overflow: hidden; }
.bk { background: #000; }
.gr { background: linear-gradient(90deg, #000, #fff); }
.t2 { margin-top: 4px; }
.t3 { margin-top: 0; }
.t4 { margin-top: 9px; }

.center { width: 1368px; flex: none; display: flex; flex-direction: column; }
.doctabs { height: 29px; flex: none; background: #424242; border-bottom: 1px solid #3a3a3a; display: flex; box-sizing: border-box; }
.doctab { width: 230px; background: #535353; display: flex; align-items: center; justify-content: space-between; padding: 0 6px 2px 9px; box-sizing: border-box; font-size: 11px; font-weight: 600; color: #e4e4e4; border-right: 1px solid #3a3a3a; white-space: nowrap; }
.doctab b { font: 700 13px "Liberation Sans", sans-serif; color: #e8e8e8; margin-right: 0; }
.canvaswrap { flex: 1; display: flex; min-height: 0; }
.canvas { flex: 1; position: relative; background: #606060; overflow: hidden; }
.board { position: absolute; background: #fff; box-sizing: border-box; box-shadow: 0 0 0 1px #8c8c8c; }
.board.dark { background: #000; }
.logo { display: block; }
.ghost { position: absolute; left: 574px; top: 931px; width: 202px; height: 10px; background: linear-gradient(#8a8a8a, #6c6c6c 70%, #5e5e5e); }
.vscroll { width: 13px; flex: none; background: #535353; position: relative; color: #aaa; }
.vup { position: absolute; left: 1px; top: 4px; }
.vthumb { position: absolute; left: 0; top: 500px; width: 15px; height: 24px; border-radius: 7px; background: #6e6e6e; z-index: 2; }
.status { height: 11px; flex: none; background: #535353; display: flex; align-items: flex-start; overflow: hidden; position: relative; font-size: 10.500px; line-height: 14px; color: #d8d8d8; padding-left: 4px; }
.sf { height: 11px; background: #424242; display: block; padding-left: 3px; box-sizing: border-box; padding-top: 1px; }
.f1 { width: 51px; }
.f2 { width: 50px; margin-left: 5px; }
.f3 { width: 40px; color: #6fb0f0; }
.sc { width: 17px; padding-left: 3px; box-sizing: border-box; color: #b8b8b8; padding-top: 3px; background: #4a4a4a; }
.nav { display: block; margin: 1px 0 0 7px; width: 36px; }
.n2 { width: 34px; margin-left: 6px; border-right: 1px solid #3c3c3c; }
.n3 { position: absolute; left: 495px; margin: 1px 0 0; }
.n4 { position: absolute; left: 1344px; margin: 1px 0 0; width: 8px; }
.sel-txt { width: 200px; margin-left: 0; text-align: center; padding-top: 1px; color: #cfcfcf; }
.hthumb { position: absolute; left: 1033px; top: 0; width: 27px; height: 11px; border-radius: 6px; background: #6e6e6e; }

.gutter { width: 6px; flex: none; background: #535353; border-right: 1px solid #3a3a3a; box-sizing: border-box; }
.dockgap { width: 3px; flex: none; background: #3a3a3a; }
.dock { display: flex; flex-direction: column; flex: none; background: #383838; overflow: hidden; }
.dk1 { width: 250px; }
.dk2 { width: 251px; }
.collapse { height: 12px; flex: none; background: #424242; display: flex; align-items: center; justify-content: flex-end; padding-right: 5px; border-bottom: 1px solid #3a3a3a; box-sizing: border-box; }
.strip { height: 27px; flex: none; display: flex; background: #424242; position: relative; font-size: 10px; font-weight: 600; color: #a8a8a8; }
.strip.s28 { height: 28px; }
.strip.s19 { height: 19px; align-items: stretch; }
.strip.s19 .tab { padding: 6px 0 0; }
.strip.last { height: 20px; }
.strip.last .tab { padding-bottom: 5px; }
.strip.last .burger { top: 8px; }
.tab { display: flex; align-items: center; justify-content: center; gap: 5px; box-sizing: border-box; border-right: 1px solid #383838; white-space: nowrap; flex: none; overflow: hidden; padding-bottom: 2px; }
.tab.clip { justify-content: flex-start; padding-left: 9px; }
.tab.ticked { justify-content: flex-start; padding-left: 4px; gap: 4px; }
.tab.on { background: #535353; color: #f2f2f2; }
.burger { position: absolute; right: 6px; top: 50%; margin-top: -5px; width: 11px; height: 9px; border-top: 1px solid #c0c0c0; border-bottom: 1px solid #c0c0c0; box-sizing: border-box; }
.burger::after { content: ""; position: absolute; left: 0; right: 0; top: 3px; height: 1px; background: #c0c0c0; }
.gap { height: 3px; flex: none; background: #383838; }
.gap.g2 { height: 2px; }
.body { background: #535353; flex: none; }
.lbl { font-size: 9.800px; font-weight: 600; color: #bcbcbc; line-height: 14px; }
.hr { height: 2px; background: #4a4a4a; margin: 0 5px; }

.align { height: 176px; padding-left: 0; box-sizing: border-box; color: #c4c4c4; }
.align .lbl { padding-left: 5px; }
.l1 { padding-top: 8px; }
.icorow { display: flex; }
.cell { width: 36px; height: 24px; display: flex; align-items: center; justify-content: center; }
.cell.gapl { margin-left: 34px; }
.ir1 { margin-top: 6px; }
.h1 { margin-top: 6px; }
.l2 { margin-top: 6px; }
.ir2 { margin-top: 7px; }
.h2 { margin-top: 6px; }
.spacing { display: flex; margin-top: 6px; position: relative; }
.sp-left { width: 140px; }
.sp-row { display: flex; align-items: center; margin-top: 8px; padding-left: 7px; gap: 12px; }
.sp-input { width: 57px; height: 20px; background: #5a5a5a; display: flex; align-items: center; color: #6f6f6f; font-size: 10px; font-weight: 600; border-radius: 2px; margin-left: -4px; }
.sp-input em { font-style: normal; margin-left: 3px; }
.spin { display: flex; flex-direction: column; align-items: center; width: 17px; flex: none; }
.sp-input .spin { color: #707070; border-right: 1px solid #505050; }
.vdiv { width: 2px; height: 44px; background: #4a4a4a; margin-top: -1px; }
.sp-right { margin-left: 15px; }
.align .sp-right .lbl { padding-left: 0; margin-left: -2px; }
.r2 { padding-left: 0; gap: 7px; margin-top: 6px; }
.atbtn { width: 24px; height: 24px; display: flex; align-items: center; justify-content: center; border-radius: 3px; }
.atbtn.on { background: #2f2f2f; color: #e6e6e6; }

.brushes { height: 263px; display: flex; flex-direction: column; box-sizing: border-box; padding-top: 6px; }
.brushbox { margin: 0 5px 0 5px; width: 239px; height: 237px; border: 1px solid #5e5e5e; box-sizing: border-box; padding: 0; position: relative; }
.tiles { display: flex; gap: 1px; height: 33px; margin-bottom: 0; }
.tile { width: 32px; height: 32px; background: #e4e4e4; display: flex; align-items: center; justify-content: center; }
.dot { display: block; background: #000; border-radius: 50%; }
.b3 { width: 3px; height: 3px; }
.b10 { width: 11px; height: 11px; }
.b2 { width: 3px; height: 2px; transform: rotate(-25deg); }
.b12 { width: 13px; height: 13px; }
.brow { width: 224px; height: 32px; background: #e4e4e4; margin-bottom: 1px; display: flex; align-items: center; position: relative; overflow: hidden; color: #111; }
.brow svg { display: block; }
.basic .bline { display: block; width: 187px; height: 2px; background: #000; margin-left: 5px; }
.basic span { margin-left: 4px; font-size: 9.500px; font-weight: 500; }
.calic { margin-left: 8px; }
.cal span { margin-left: 10px; font-size: 10px; font-weight: 600; }
.wave { margin-left: 27px; }
.brfoot { display: flex; align-items: center; height: 20px; padding-left: 9px; margin-top: 3px; color: #c8c8c8; }
.fo { margin-left: 9px; }
.sp { width: 77px; }
.dim { opacity: 0.35; }
.f1a { margin-left: 0; }
.f1b { margin-left: 12px; }
.f1c { margin-left: 13px; }
.f1d { margin-left: 10.500px; }

.char { height: 307px; box-sizing: border-box; padding-top: 7px; color: #b8b8b8; }
.field { height: 20px; background: #454545; border-radius: 2px; display: flex; align-items: center; box-shadow: 0 0 0 1px #4c4c4c; color: #e0e0e0; }
.fontf { width: 219px; margin-left: 5px; }
.fic { display: flex; align-items: center; color: #bbb; width: 27px; padding-left: 2px; box-sizing: border-box; flex: none; }
.ftxt { font-size: 9.800px; font-weight: 600; flex: 1; color: #e4e4e4; }
.ftxt.l { padding-left: 6px; }
.fcar { width: 18px; height: 20px; display: flex; align-items: center; justify-content: center; border-left: 1px solid #555; color: #d0d0d0; box-sizing: border-box; }
.lightf { width: 239px; margin: 6px 0 0 5px; }
.c1 { margin-top: 5px; }
.crow { display: flex; justify-content: space-between; padding: 0 6px 0 5px; height: 20px; }
.cr0, .cr1, .cr2, .cr3 { margin-top: 6px; }
.c2 { margin-top: 5px; }
.ccell { display: flex; width: 102px; }
.cic { width: 22px; display: flex; align-items: center; color: #c0c0c0; }
.cbox { width: 80px; height: 20px; display: flex; align-items: center; background: #484848; box-shadow: 0 0 0 1px #4c4c4c; border-radius: 1px; color: #e0e0e0; }
.cbox .spin { border-right: 1px solid #555; color: #d0d0d0; height: 20px; justify-content: center; box-sizing: border-box; }
.val { flex: 1; font-size: 9.800px; font-weight: 500; padding-left: 3px; white-space: nowrap; color: #dedede; }
.ccar { width: 18px; height: 20px; display: flex; align-items: center; justify-content: center; border-left: 1px solid #555; box-sizing: border-box; color: #d0d0d0; }
.c3 { margin-top: 6px; }
.ttrow { position: relative; height: 22px; font: 15px "Liberation Serif", serif; color: #b0b0b0; }
.tt { position: absolute; top: 2px; }
.tt small { font-size: 12px; }
.tt sup, .tt sub { font-size: 7px; }
.a { left: 9px; letter-spacing: 1px; }
.b { left: 40px; }
.c { left: 105px; }
.d { left: 134px; }
.e { left: 199.500px; }
.f { left: 228px; }
.c4 { margin-top: 0; }
.langrow { display: flex; align-items: center; padding-left: 5px; margin-top: 6px; height: 20px; }
.lang { width: 84px; background: #494949; }
.sharp { width: 84px; background: #494949; margin-left: auto; margin-right: 6px; }
.nocar { width: 20px; display: flex; justify-content: center; color: #d0d0d0; }
.aa { margin-left: 51px; font: 12px "Liberation Sans", sans-serif; color: #b0b0b0; }
.aa small { font-size: 13px; }
.c5 { margin-top: 6px; }
.snap { display: flex; justify-content: space-between; align-items: center; padding: 0 8px 0 5px; height: 26px; margin-top: 4px; }
.snapi { display: flex; gap: 17.500px; color: #c0c0c0; }
.glyphs { display: flex; align-items: center; padding-left: 6px; gap: 0; margin-top: 4px; color: #747474; }
.gb { width: 25px; height: 26px; background: #575757; display: flex; align-items: center; justify-content: center; margin-right: 12px; }
.gb:nth-child(2) { margin-right: 20px; }
.gb:nth-child(3) { margin-right: 17px; width: 24px; }
.gb:nth-child(4) { margin-right: 14px; }
.gb:nth-child(6) { margin-right: 13px; }
.gdiv { width: 2px; height: 26px; background: #4a4a4a; margin-right: 17px; margin-left: 2px; }
.darkbody { height: 72px; flex: none; background: #404040; }

.layersbody { height: 1010px; box-sizing: border-box; position: relative; }
.lsearch { display: flex; align-items: center; padding: 11px 0 0 11px; height: 23px; box-sizing: content-box; }
.lsfield { width: 204px; height: 23px; background: #474747; border-radius: 3px; display: flex; align-items: center; gap: 9px; padding-left: 5px; box-sizing: border-box; color: #c4c4c4; font-size: 11px; box-shadow: 0 0 0 1px #4c4c4c; }
.lsfield span { color: #6c6c6c; font-weight: 600; }
.lfilter { margin-left: 9px; color: #c0c0c0; }
.layerbox { margin: 7px 6px 0 5px; width: 240px; height: 954px; border: 1px solid #5e5e5e; box-sizing: border-box; }
.lrow { height: 21px; display: flex; align-items: stretch; border-bottom: 1px solid #5a5a5a; box-sizing: border-box; position: relative; }
.lrow.on { background: #4a617c; height: 22px; }
.leye { width: 21px; display: flex; align-items: center; justify-content: center; border-right: 1px solid #5a5a5a; color: #c8c8c8; flex: none; }
.lmid { flex: 1; display: flex; align-items: center; padding-left: 22px; }
.lchip { width: 3px; height: 18px; display: block; flex: none; }
.lchev { width: 20px; margin-left: 3px; color: #e8e8e8; display: flex; }
.thumb { width: 18px; height: 18px; background: #fff; border: 1px solid #000; box-sizing: border-box; flex: none; position: relative; margin-left: 1px; display: block; }
.thumb i { display: block; position: absolute; }
.green i { left: 0; right: 0; top: 6px; height: 4px; background: #5fdc1e; }
.tiny i { left: 1px; top: 2px; width: 7px; height: 4px; background: repeating-linear-gradient(90deg, #555 0 1px, #fff 1px 2px); }
.black i { left: 2px; top: 1px; width: 4px; height: 14px; background: #000; box-shadow: 8px 6px 0 -1px #000, 4px 6px 0 -1px #000; }
.lname { margin-left: 5px; font-size: 10px; font-weight: 600; color: #e2e2e2; }
.ltgt { width: 37px; border-left: 1px solid #5a5a5a; display: flex; align-items: center; padding-left: 5px; box-sizing: border-box; color: #d0d0d0; flex: none; }
.lcorner { position: absolute; right: 0; top: 0; width: 0; height: 0; border-top: 6px solid #e8e8e8; border-left: 6px solid transparent; }
.lfoot { display: flex; align-items: center; position: absolute; left: 5px; top: 995px; height: 20px; font-size: 10px; font-weight: 600; color: #c4c4c4; }
.lficons { display: flex; gap: 10.500px; margin-left: 15px; color: #c8c8c8; }
</style>
